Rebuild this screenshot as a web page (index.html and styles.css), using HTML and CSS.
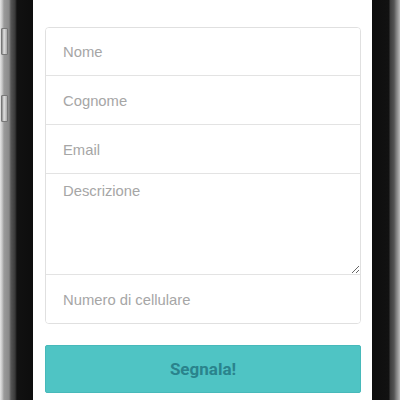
FILE: index.html
```html
<!DOCTYPE html>
<html lang="it">
<head>
<meta charset="utf-8">
<title>Segnala</title>
<link rel="stylesheet" href="styles.css">
</head>
<body>
<div class="phone">
  <div class="bezel-left">
    <span class="side-btn side-btn-1"></span>
    <span class="side-btn side-btn-2"></span>
  </div>
  <main class="screen">
    <form class="form">
      <div class="fields">
        <input class="field" type="text" placeholder="Nome">
        <input class="field" type="text" placeholder="Cognome">
        <input class="field" type="email" placeholder="Email">
        <textarea class="field area" placeholder="Descrizione"></textarea>
        <input class="field" type="tel" placeholder="Numero di cellulare">
      </div>
      <button class="submit" type="button">Segnala!</button>
    </form>
  </main>
  <div class="bezel-right"></div>
</div>
</body>
</html>
```
FILE: styles.css
```css
html, body {
  margin: 0;
  padding: 0;
  height: 400px;
  overflow: hidden;
  background: #ffffff;
}
.phone {
  display: flex;
  height: 400px;
}
.bezel-left {
  position: relative;
  width: 33px;
  flex: none;
  background: linear-gradient(to right, #e6e6e6 0, #c8c8c8 2px, #9a9a9a 4px, #8a8a8a 9px, #555 11px, #3a3a3a 15px, #111 17px, #0d0d0d 33px);
}
.side-btn {
  position: absolute;
  left: 1px;
  width: 5px;
  height: 25px;
  background: linear-gradient(to right, #888, #e0e0e0 40%, #aaa);
  border: 1px solid #777;
  border-radius: 1px;
}
.side-btn-1 { top: 28px; }
.side-btn-2 { top: 95px; }
.bezel-right {
  width: 28px;
  flex: none;
  background: linear-gradient(to right, #0d0d0d 0, #111 17px, #3c3c3c 18px, #555 22px, #7a7a7a 24px, #9a9a9a 26px, #bbb 28px);
}
.screen {
  flex: 1;
  background: #fff;
  padding: 27px 11px 0 12px;
}
.form {
  display: flex;
  flex-direction: column;
  gap: 21px;
}
.fields {
  display: flex;
  flex-direction: column;
  border: 1px solid #e0e0e0;
  border-radius: 4px;
  overflow: hidden;
}
.field {
  display: block;
  box-sizing: border-box;
  width: 100%;
  height: 49px;
  margin: 0;
  padding: 1px 17px 0;
  border: 0;
  border-top: 1px solid #e3e3e3;
  background: #fff;
  font-family: "Liberation Sans", Arial, sans-serif;
  font-size: 14.8px;
  color: #555;
  outline: none;
}
.field:first-child {
  border-top: 0;
  height: 47px;
}
.field::placeholder {
  color: #a6a6a6;
}
.area {
  height: 101px;
  padding-top: 9px;
  resize: vertical;
}
.submit {
  box-sizing: border-box;
  height: 48px;
  width: 100%;
  margin: 0;
  border: 1px solid #47b9ba;
  border-radius: 2px;
  background: #4fc4c4;
  color: #2a838c;
  font-family: Roboto, "Liberation Sans", sans-serif;
  font-weight: 700;
  font-size: 17px;
  cursor: pointer;
}
```
